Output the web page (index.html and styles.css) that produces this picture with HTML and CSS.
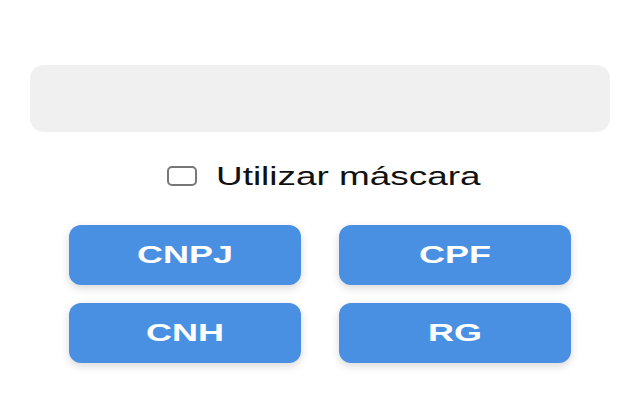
FILE: index.html
```html
<!DOCTYPE html>
<html lang="pt-BR">
<head>
<meta charset="utf-8">
<title>Gerador</title>
<link rel="stylesheet" href="styles.css">
</head>
<body>
<div class="page">
  <div class="field"></div>
  <label class="mask">
    <input type="checkbox" class="box">
    <span class="mask-text">Utilizar máscara</span>
  </label>
  <div class="grid">
    <button class="btn"><span class="btn-text">CNPJ</span></button>
    <button class="btn"><span class="btn-text">CPF</span></button>
    <button class="btn"><span class="btn-text">CNH</span></button>
    <button class="btn"><span class="btn-text">RG</span></button>
  </div>
</div>
</body>
</html>
```
FILE: styles.css
```css
html, body {
  margin: 0;
  padding: 0;
  background: #ffffff;
  font-family: "Liberation Sans", Arial, sans-serif;
}

.page {
  width: 640px;
  height: 400px;
  padding-top: 65px;
  box-sizing: border-box;
}

.field {
  margin: 0 30px;
  height: 67px;
  border-radius: 14px;
  background: #f0f0f0;
}

.mask {
  display: flex;
  justify-content: center;
  align-items: center;
  height: 30px;
  margin-top: 29px;
  padding-left: 8px;
  gap: 19px;
}

.box {
  appearance: none;
  -webkit-appearance: none;
  margin: 0;
  width: 30px;
  height: 20px;
  border: 2px solid #777777;
  border-radius: 5px;
  background: #ffffff;
  box-sizing: border-box;
}

.mask-text {
  display: inline-block;
  font-size: 26px;
  line-height: 30px;
  color: #111111;
  transform: scaleX(1.42);
  transform-origin: left center;
  margin-right: 78px;
}

.grid {
  display: grid;
  grid-template-columns: 232px 232px;
  column-gap: 38px;
  row-gap: 18px;
  padding: 0 69px;
  margin-top: 34px;
}

.btn {
  height: 60px;
  border: none;
  border-radius: 12px;
  background: #4a90e2;
  color: #ffffff;
  font-family: "Liberation Sans", Arial, sans-serif;
  font-weight: bold;
  font-size: 24px;
  box-shadow: 0 3px 8px rgba(0, 0, 0, 0.16);
  padding: 0;
  display: flex;
  align-items: center;
  justify-content: center;
}

.btn-text {
  display: inline-block;
  transform: scaleX(1.5);
}
```
